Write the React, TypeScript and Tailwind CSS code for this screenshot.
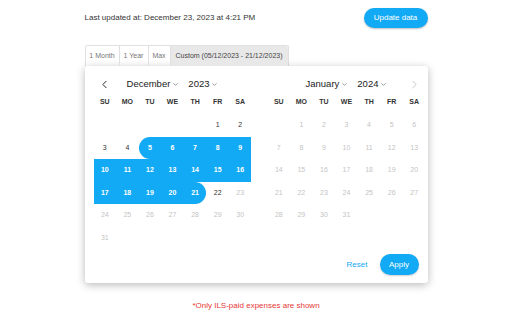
import { ChevronDown, ChevronLeft, ChevronRight } from "lucide-react";

const BLUE = "bg-[#12a9f5]";

const weekdays = ["SU", "MO", "TU", "WE", "TH", "FR", "SA"];

type Cell = { day: number | null; muted?: boolean; inRange?: boolean; start?: boolean; end?: boolean };

const buildMonth = (offset: number, days: number, opts: (d: number) => Partial<Cell>): Cell[] => {
  const cells: Cell[] = [];
  for (let i = 0; i < offset; i++) cells.push({ day: null });
  for (let d = 1; d <= days; d++) cells.push({ day: d, ...opts(d) });
  return cells;
};

const december = buildMonth(5, 31, (d) => ({
  muted: d > 22,
  inRange: d >= 5 && d <= 21,
  start: d === 5,
  end: d === 21,
}));

const january = buildMonth(1, 31, () => ({ muted: true }));

const DayCell = ({ cell }: { cell: Cell }) => {
  if (!cell.day) return <div className="h-[22.5px]" />;

  let cls = "flex h-[22.5px] items-center justify-center text-[7px]";
  if (cell.inRange) {
    cls += ` ${BLUE} font-semibold text-white`;
    if (cell.start) cls += " rounded-l-full";
    if (cell.end) cls += " rounded-r-full";
  } else if (cell.muted) {
    cls += " text-[#c4c4c4]";
  } else {
    cls += " text-[#333]";
  }
  return <div className={cls}>{cell.day}</div>;
};

const Calendar = ({
  month,
  year,
  cells,
  side,
}: {
  month: string;
  year: string;
  cells: Cell[];
  side: "left" | "right";
}) => (
  <div className="w-[158px]">
    {/* HEADER */}
    <div className="flex h-[16px] items-center">
      <div className="flex w-[22.5px] justify-center">
        {side === "left" && <ChevronLeft size={13} strokeWidth={1.8} className="text-[#222]" />}
      </div>
      <div className="flex flex-1 items-center justify-center gap-[9px] text-[9.5px] font-medium text-[#222]">
        <span className="flex items-center gap-[2px]">
          {month}
          <ChevronDown size={7} strokeWidth={2} className="mt-[1px] text-[#555]" />
        </span>
        <span className="flex items-center gap-[2px]">
          {year}
          <ChevronDown size={7} strokeWidth={2} className="mt-[1px] text-[#555]" />
        </span>
      </div>
      <div className="flex w-[22.5px] justify-center">
        {side === "right" && <ChevronRight size={13} strokeWidth={1.5} className="text-[#bbb]" />}
      </div>
    </div>

    {/* WEEKDAYS */}
    <div className="mt-[3px] grid h-[14px] grid-cols-7 items-center">
      {weekdays.map((w) => (
        <div key={w} className="text-center text-[7px] font-bold text-[#333]">
          {w}
        </div>
      ))}
    </div>

    {/* DAYS */}
    <div className="mt-[5px] grid grid-cols-7">
      {cells.map((c, i) => (
        <DayCell key={i} cell={c} />
      ))}
    </div>
  </div>
);

export default function App() {
  return (
    <div className="min-h-[320px] bg-white font-['Liberation_Sans',Arial,sans-serif]">
      <div className="mx-auto w-[343px] pt-[8px]">
        {/* TOP ROW */}
        <div className="flex h-[20px] items-center justify-between">
          <span className="text-[8px] text-[#333]">Last updated at: December 23, 2023 at 4:21 PM</span>
          <button
            className={`flex h-[20px] w-[64px] items-center justify-center rounded-full ${BLUE} text-[8px] font-medium text-white shadow-[0_1px_2px_rgba(0,0,0,0.25)]`}
          >
            Update data
          </button>
        </div>

        {/* RANGE TABS */}
        <div className="mt-[17px] flex h-[21px] w-[204px] rounded-t-[2px] border border-b-0 border-[#e0e0e0] text-[7px] text-[#777]">
          <div className="flex w-[34px] items-center justify-center border-r border-[#e0e0e0]">1 Month</div>
          <div className="flex w-[29px] items-center justify-center border-r border-[#e0e0e0]">1 Year</div>
          <div className="flex w-[22px] items-center justify-center border-r border-[#e0e0e0]">Max</div>
          <div className="flex flex-1 items-center justify-center rounded-tr-[2px] bg-[#e8e8e8] text-[#444]">
            Custom (05/12/2023 - 21/12/2023)
          </div>
        </div>

        {/* DATE PICKER POPUP */}
        <div className="flex h-[217px] flex-col rounded-[3px] bg-white pl-[9px] pr-[2px] pt-[10px] shadow-[0_2px_8px_rgba(0,0,0,0.28)]">
          <div className="flex gap-[16px]">
            <Calendar month="December" year="2023" cells={december} side="left" />
            <Calendar month="January" year="2024" cells={january} side="right" />
          </div>

          <div className="mr-[7px] mt-[5px] flex items-center justify-end gap-[12px]">
            <button className="text-[8px] text-[#12a9f5]">Reset</button>
            <button
              className={`flex h-[21px] w-[39px] items-center justify-center rounded-full ${BLUE} text-[8px] font-medium text-white shadow-[0_1px_2px_rgba(0,0,0,0.2)]`}
            >
              Apply
            </button>
          </div>
        </div>

        {/* NOTE */}
        <p className="mt-[17px] text-center text-[8px] text-[#e53935]">*Only ILS-paid expenses are shown</p>
      </div>
    </div>
  );
}
